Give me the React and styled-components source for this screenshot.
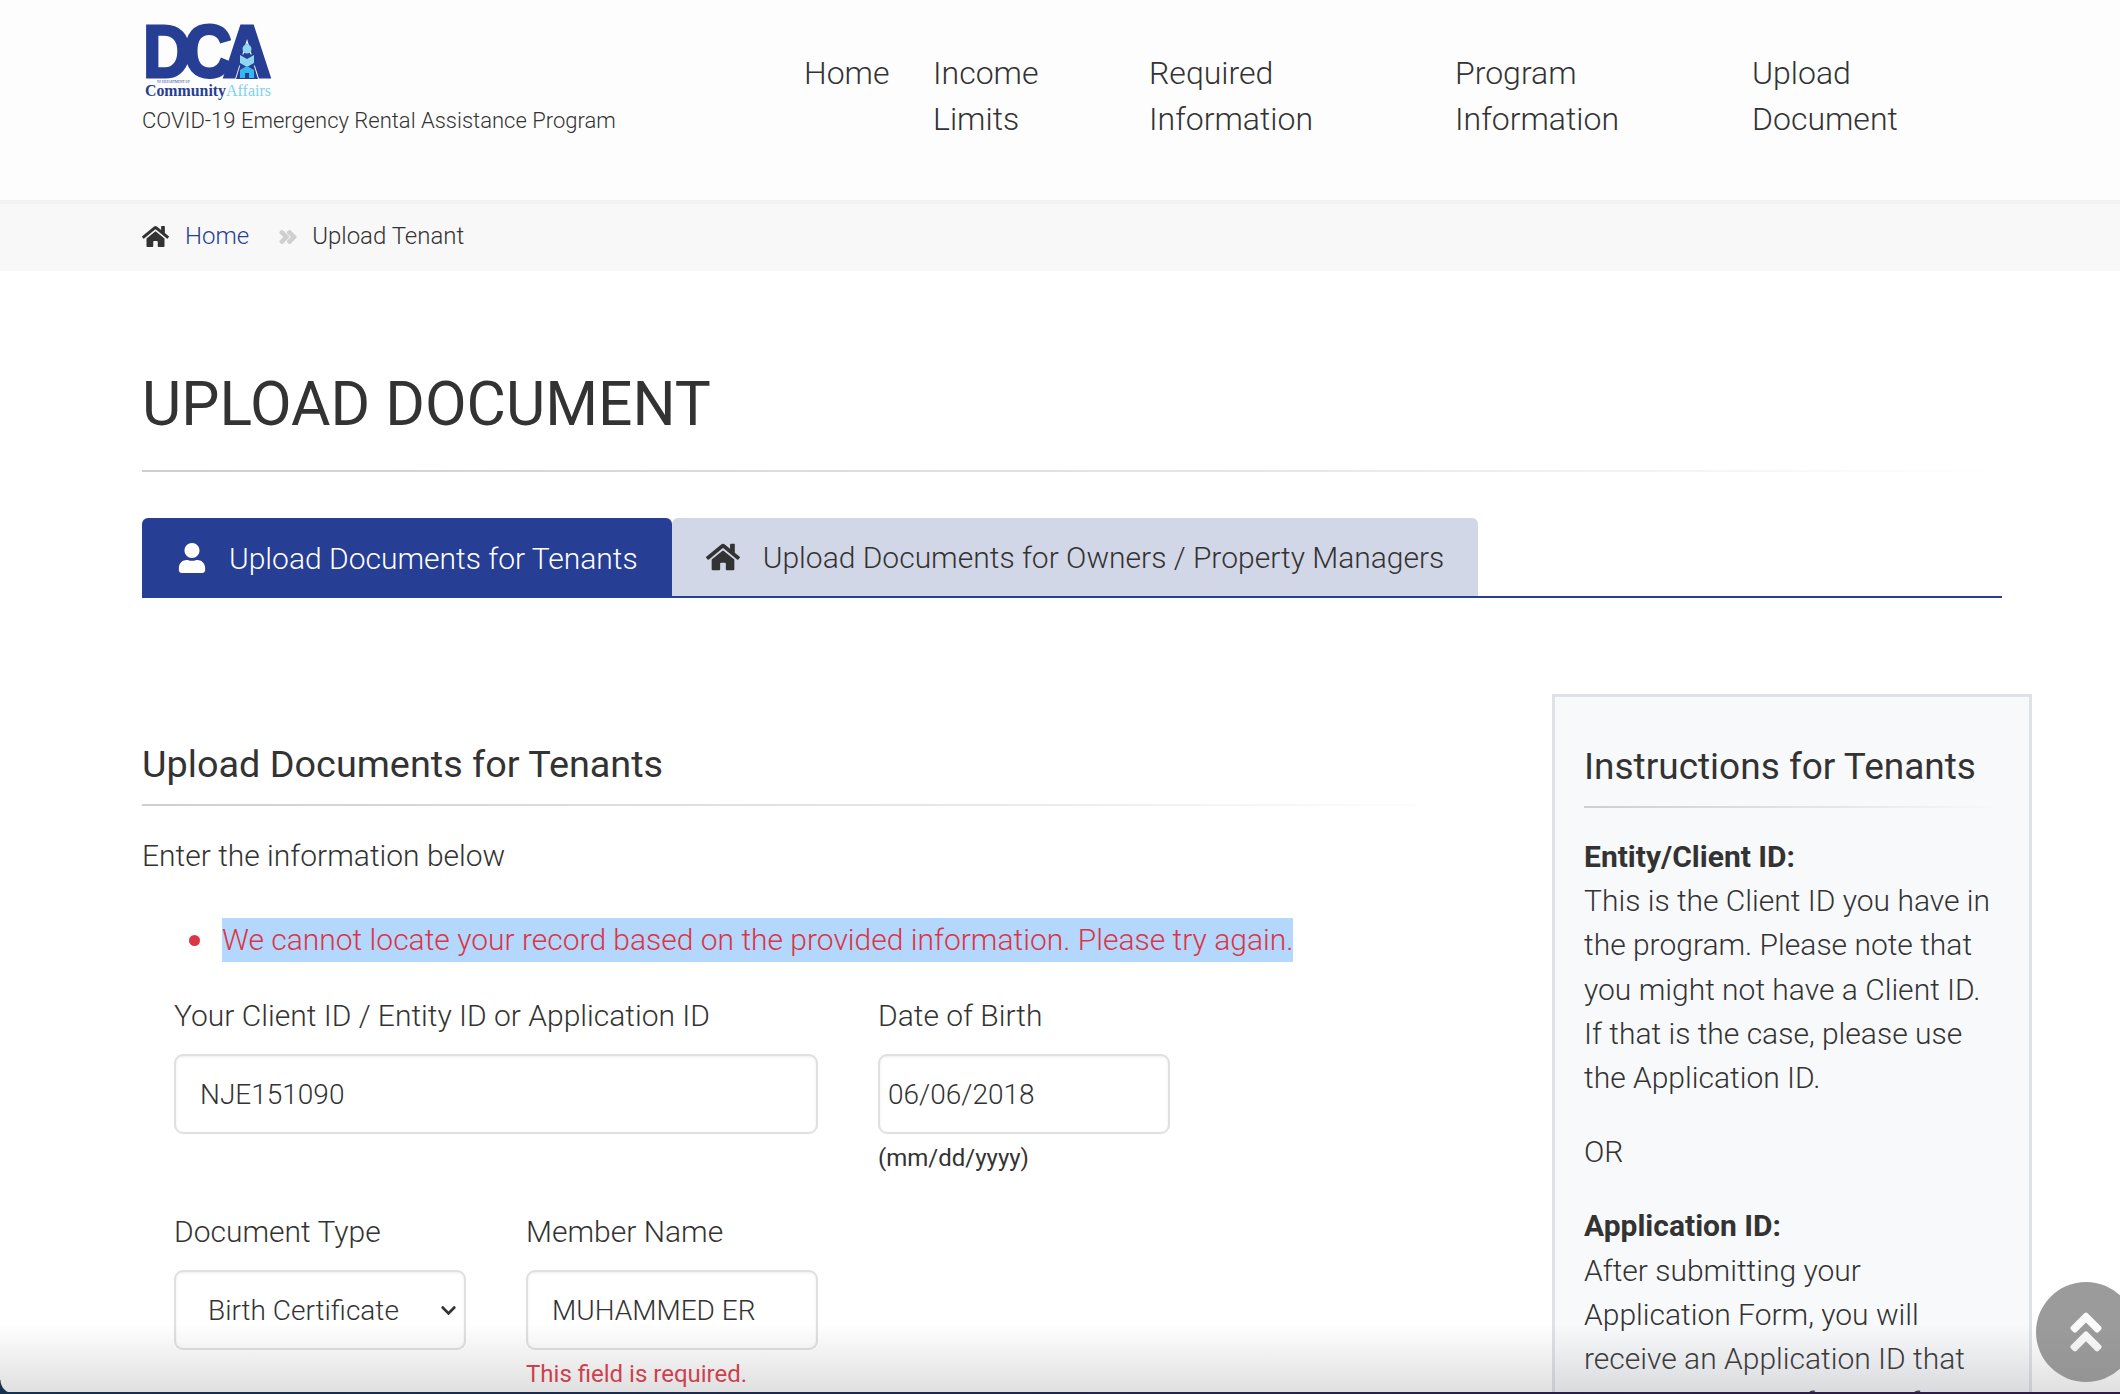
import React from "react";
import styled, { createGlobalStyle } from "styled-components";
import { FaHome, FaUser, FaAngleDoubleRight, FaAngleDoubleUp, FaChevronDown } from "react-icons/fa";

const GlobalStyle = createGlobalStyle`
  html, body { margin: 0; padding: 0; height: 100%; overflow: hidden; background: #fff; }
  body { font-family: Roboto, "Liberation Sans", sans-serif; font-weight: 300; color: #333; }
  * { box-sizing: border-box; }
`;

const Page = styled.div`
  height: 1394px;
  overflow: hidden;
  position: relative;
`;

const Header = styled.header`
  height: 204px;
  background: #fdfdfd;
  border-bottom: 4px solid #f2f2f2;
  display: flex;
  padding-left: 142px;
`;

const Brand = styled.div`
  width: 662px;
  padding-top: 23px;
  flex-shrink: 0;
`;

const LogoMark = styled.svg`
  display: block;
  margin-left: 3px;
  overflow: visible;
`;

const Tagline = styled.div`
  font-size: 22px;
  line-height: 30px;
  margin-top: 7px;
  color: #333;
`;

const Nav = styled.nav`
  display: flex;
  padding-top: 50px;
  font-size: 32px;
  line-height: 46px;
  color: #333;
`;

const NavItem = styled.div`
  width: ${(p) => p.$w}px;
`;

const Crumbs = styled.div`
  height: 67px;
  background: #f8f8f8;
  display: flex;
  align-items: center;
  padding: 0 0 3px 142px;
  font-size: 24px;
  color: #333;
`;

const CrumbLink = styled.a`
  color: #263e93;
  margin-left: 16px;
`;

const CrumbSep = styled.span`
  color: #d0d0d0;
  margin: 2px 14px 0 29px;
  display: flex;
  font-size: 20px;
  svg { stroke: currentColor; stroke-width: 40px; }
`;

const Content = styled.main`
  padding: 0 118px 0 142px;
`;

const Title = styled.h1`
  margin: 0;
  padding-top: 98px;
  font-size: 60.5px;
  line-height: 72px;
  font-weight: 400;
  color: #333;
`;

const Rule = styled.div`
  height: 2px;
  background: linear-gradient(to right, #cfcfcf, #e6e6e6 60%, rgba(255, 255, 255, 0));
  margin-top: ${(p) => p.$top || 0}px;
`;

const Tabs = styled.div`
  display: flex;
  margin-top: 46px;
  border-bottom: 2px solid #263e93;
  height: 80px;
`;

const Tab = styled.div`
  height: ${(p) => (p.$active ? 80 : 78)}px;
  display: flex;
  align-items: center;
  gap: ${(p) => (p.$active ? 22 : 23)}px;
  padding: 0 34px 0 ${(p) => (p.$active ? 35 : 34)}px;
  font-size: 30px;
  border-radius: 6px 6px 0 0;
  background: ${(p) => (p.$active ? "#263e93" : "#d2d7e7")};
  color: ${(p) => (p.$active ? "#fff" : "#333")};
`;

const Columns = styled.div`
  display: flex;
  justify-content: space-between;
  margin-top: 96px;
  margin-right: -30px;
  align-items: flex-start;
`;

const FormColumn = styled.section`
  width: 1310px;
  padding-top: 47px;
`;

const SectionTitle = styled.h2`
  margin: 0;
  font-size: 37.8px;
  line-height: 46px;
  font-weight: 400;
  color: #333;
`;

const Intro = styled.p`
  margin: 30px 0 0;
  font-size: 30px;
  line-height: 40px;
`;

const ErrorList = styled.ul`
  margin: 42px 0 0;
  padding: 0 0 0 47px;
  list-style: none;
  color: #dc3545;
  font-size: 30px;
  line-height: 44px;
`;

const ErrorItem = styled.li`
  display: flex;
  align-items: center;
  gap: 22px;
  &::before {
    content: "";
    width: 11px;
    height: 11px;
    border-radius: 50%;
    background: #dc3545;
    flex-shrink: 0;
  }
`;

const Selected = styled.span`
  background: #b3d7fd;
`;

const FormRow = styled.div`
  display: flex;
  gap: 60px;
  padding-left: 32px;
  margin-top: ${(p) => p.$top}px;
`;

const Field = styled.div`
  width: ${(p) => p.$w}px;
`;

const Label = styled.label`
  display: block;
  font-size: 30px;
  line-height: 40px;
  margin-bottom: 18px;
`;

const Input = styled.div`
  height: 80px;
  border: 2px solid #e0e0e0;
  border-radius: 9px;
  background: #fff;
  box-shadow: inset 0 1px 3px rgba(0, 0, 0, 0.07);
  display: flex;
  align-items: center;
  justify-content: space-between;
  font-size: 28px;
  padding: 0 ${(p) => p.$right ?? 24}px 0 ${(p) => p.$left ?? 24}px;
`;

const Hint = styled.div`
  font-size: 24px;
  line-height: 30px;
  margin-top: 9px;
  font-weight: 400;
`;

const Invalid = styled.div`
  font-size: 24px;
  line-height: 30px;
  margin-top: 9px;
  color: #dc3545;
  font-weight: 400;
`;

const Card = styled.aside`
  width: 480px;
  border: 3px solid #dee2e6;
  background: #f8f9fb;
  padding: 47px 28px 0 29px;
  flex-shrink: 0;
`;

const CardTitle = styled.h3`
  margin: 0;
  font-size: 37px;
  line-height: 46px;
  font-weight: 400;
  color: #333;
`;

const CardBody = styled.div`
  margin-top: 27px;
  font-size: 30px;
  line-height: 44.2px;
`;

const CardPara = styled.p`
  margin: 0 0 30px;
  white-space: pre-line;
  strong { font-weight: 700; }
`;

const TopButton = styled.div`
  position: absolute;
  left: 2036px;
  top: 1282px;
  width: 100px;
  height: 100px;
  border-radius: 50%;
  background: #9b9b9b;
  color: #fbfbfb;
  display: flex;
  align-items: center;
  justify-content: center;
  font-size: 50px;
  z-index: 2;
`;

const BottomShade = styled.div`
  position: absolute;
  left: 0;
  right: 0;
  bottom: 0;
  height: 70px;
  background: linear-gradient(to bottom, rgba(120, 120, 125, 0), rgba(120, 120, 125, 0.24));
  z-index: 3;
  pointer-events: none;
`;

const WindowEdge = styled.div`
  position: absolute;
  left: 0;
  right: 0;
  bottom: 0;
  height: 2px;
  background: linear-gradient(to right, #16304f, #2e1a47);
  z-index: 4;
`;

const WindowCorner = styled.div`
  position: absolute;
  left: 0;
  bottom: 0;
  width: 14px;
  height: 14px;
  background: radial-gradient(circle at top right, transparent 13px, #16304f 14px);
  z-index: 4;
`;

const Logo = () => (
  <LogoMark width="128" height="76" viewBox="0 0 128 76">
    <text
      transform="translate(-2 54) scale(0.9 1)"
      fontFamily="Liberation Sans"
      fontWeight="700"
      fontSize="74"
      fill="#263e93"
      stroke="#263e93"
      strokeWidth="3"
    >
      D<tspan dx="-8">C</tspan>
      <tspan dx="-10">A</tspan>
    </text>
    <path d="M91 56 L102 20 L113 56z" fill="#263e93" />
    <circle cx="102" cy="26" r="4.5" fill="#8fd6f2" />
    <path d="M95 32 l7 4 l7-4 v8 l-7 4 l-7-4z" fill="#8fd6f2" />
    <path d="M95 47 l7-4 l7 4 v8 h-5 v-5 h-4 v5 h-5z" fill="#38b6ee" />
    <text x="12" y="60" fontFamily="Liberation Serif" fontSize="3.5" fill="#263e93">
      NJ DEPARTMENT OF
    </text>
    <text
      x="0"
      y="73"
      fontFamily="Liberation Serif"
      fontWeight="700"
      fontSize="16"
      textLength="81"
      lengthAdjust="spacingAndGlyphs"
      fill="#263e93"
    >
      Community
    </text>
    <text
      x="81"
      y="73"
      fontFamily="Liberation Serif"
      fontSize="16"
      textLength="45"
      lengthAdjust="spacingAndGlyphs"
      fill="#7fd0f5"
    >
      Affairs
    </text>
  </LogoMark>
);

export default function App() {
  return (
    <Page>
      <GlobalStyle />
      <Header>
        <Brand>
          <Logo />
          <Tagline>COVID-19 Emergency Rental Assistance Program</Tagline>
        </Brand>
        <Nav>
          <NavItem $w={129}>Home</NavItem>
          <NavItem $w={216}>
            Income
            <br />
            Limits
          </NavItem>
          <NavItem $w={306}>
            Required
            <br />
            Information
          </NavItem>
          <NavItem $w={297}>
            Program
            <br />
            Information
          </NavItem>
          <NavItem $w={200}>
            Upload
            <br />
            Document
          </NavItem>
        </Nav>
      </Header>
      <Crumbs>
        <FaHome size={27} color="#333" />
        <CrumbLink>Home</CrumbLink>
        <CrumbSep>
          <FaAngleDoubleRight />
        </CrumbSep>
        Upload Tenant
      </Crumbs>
      <Content>
        <Title>UPLOAD DOCUMENT</Title>
        <Rule $top={29} />
        <Tabs>
          <Tab $active>
            <FaUser size={30} />
            Upload Documents for Tenants
          </Tab>
          <Tab>
            <FaHome size={34} />
            Upload Documents for Owners / Property Managers
          </Tab>
        </Tabs>
        <Columns>
          <FormColumn>
            <SectionTitle>Upload Documents for Tenants</SectionTitle>
            <Rule $top={17} />
            <Intro>Enter the information below</Intro>
            <ErrorList>
              <ErrorItem>
                <Selected>We cannot locate your record based on the provided information. Please try again.</Selected>
              </ErrorItem>
            </ErrorList>
            <FormRow $top={34}>
              <Field $w={644}>
                <Label>Your Client ID / Entity ID or Application ID</Label>
                <Input>NJE151090</Input>
              </Field>
              <Field $w={292}>
                <Label>Date of Birth</Label>
                <Input $left={8}>06/06/2018</Input>
                <Hint>(mm/dd/yyyy)</Hint>
              </Field>
            </FormRow>
            <FormRow $top={39}>
              <Field $w={292}>
                <Label>Document Type</Label>
                <Input $left={32} $right={7}>
                  Birth Certificate
                  <FaChevronDown size={17} color="#333" />
                </Input>
              </Field>
              <Field $w={292}>
                <Label>Member Name</Label>
                <Input>MUHAMMED ER</Input>
                <Invalid>This field is required.</Invalid>
              </Field>
            </FormRow>
          </FormColumn>
          <Card>
            <CardTitle>Instructions for Tenants</CardTitle>
            <Rule $top={16} />
            <CardBody>
              <CardPara>
                <strong>Entity/Client ID:</strong>
                {"\n"}This is the Client ID you have in the program. Please note that you might not have a Client ID. If
                that is the case, please use the Application ID.
              </CardPara>
              <CardPara>OR</CardPara>
              <CardPara>
                <strong>Application ID:</strong>
                {"\n"}After submitting your Application Form, you will receive an Application ID that can serve as a
                reference for
              </CardPara>
            </CardBody>
          </Card>
        </Columns>
      </Content>
      <TopButton>
        <FaAngleDoubleUp />
      </TopButton>
      <BottomShade />
      <WindowCorner />
      <WindowEdge />
    </Page>
  );
}
